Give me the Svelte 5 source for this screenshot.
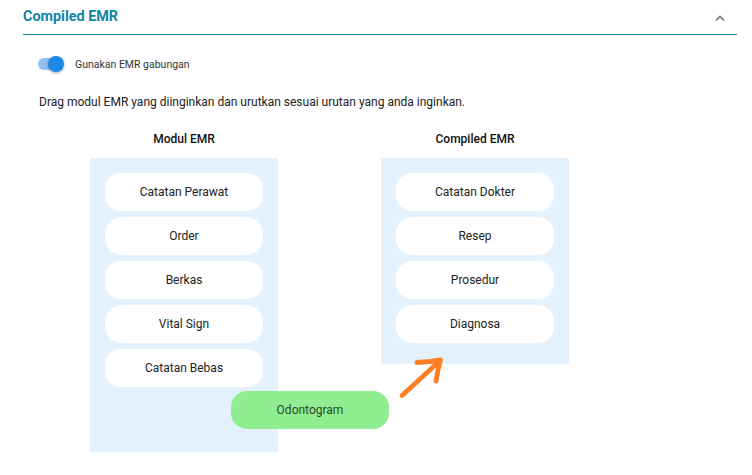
<script>
  const modul = ['Catatan Perawat', 'Order', 'Berkas', 'Vital Sign', 'Catatan Bebas'];
  const compiled = ['Catatan Dokter', 'Resep', 'Prosedur', 'Diagnosa'];
</script>

<div class="page">
  <section class="panel">
    <header class="panel-head">
      <h2>Compiled EMR</h2>
      <svg class="chevron" width="10" height="7" viewBox="0 0 10 7">
        <path d="M1 5.500 L5 1.500 L9 5.500" fill="none" stroke="#777" stroke-width="1.700" />
      </svg>
    </header>

    <div class="switch-row">
      <span class="switch"><span class="thumb"></span></span>
      <span class="switch-label">Gunakan EMR gabungan</span>
    </div>

    <p class="hint">Drag modul EMR yang diinginkan dan urutkan sesuai urutan yang anda inginkan.</p>

    <div class="columns">
      <div class="column">
        <h3>Modul EMR</h3>
        <div class="list tall">
          {#each modul as item}
            <div class="item">{item}</div>
          {/each}
        </div>
      </div>
      <div class="column">
        <h3>Compiled EMR</h3>
        <div class="list">
          {#each compiled as item}
            <div class="item">{item}</div>
          {/each}
        </div>
      </div>
    </div>
  </section>

  <!-- item yang sedang di-drag -->
  <div class="dragging">Odontogram</div>

  <svg class="arrow" width="48" height="44" viewBox="0 0 48 44">
    <path d="M4 38.500 L22 22 L34 11 L42 4 M19 5.500 L32 4.500 L42.500 3 L40 13 L38 24" fill="none" stroke="#ff7f27" stroke-width="4.800" stroke-linecap="round" stroke-linejoin="round" />
  </svg>
</div>

<style>
  :global(body) {
    margin: 0;
    background: #fff;
  }

  .page {
    position: relative;
    width: 752px;
    height: 475px;
    overflow: hidden;
    font-family: Roboto, "Liberation Sans", sans-serif;
    color: #1a1a1a;
  }

  .panel {
    margin: 0 15px 0 23px;
  }

  .panel-head {
    display: flex;
    align-items: center;
    justify-content: space-between;
    height: 34px;
    border-bottom: 1px solid #0a87a8;
    padding-right: 12px;
  }

  .panel-head h2 {
    margin: 0;
    font-size: 14.400px;
    font-weight: 700;
    color: #0f85a3;
    line-height: 36px;
  }

  .chevron {
    display: block;
    margin-top: 3px;
  }

  .switch-row {
    display: flex;
    align-items: center;
    margin: 19px 0 0 15px;
    height: 20px;
  }

  .switch {
    position: relative;
    width: 24px;
    height: 12px;
    border-radius: 6px;
    background: #8ec3f2;
    margin-right: 13px;
  }

  .thumb {
    position: absolute;
    right: -2px;
    top: -2px;
    width: 16px;
    height: 16px;
    border-radius: 50%;
    background: #1e88e5;
    box-shadow: 0 1px 3px rgba(0, 0, 0, 0.35);
  }

  .switch-label {
    font-size: 10.500px;
    color: #333;
  }

  .hint {
    margin: 21px 0 0 16px;
    font-size: 12px;
    line-height: 14px;
    color: #222;
  }

  .columns {
    display: flex;
    gap: 103px;
    margin: 23px 0 0 67px;
  }

  .column {
    width: 188px;
  }

  .column h3 {
    margin: 0 0 12px;
    font-size: 12px;
    font-weight: 500;
    line-height: 14px;
    text-align: center;
    color: #111;
  }

  .list {
    background: #e3f2fd;
    padding: 15px 15px 9px;
    height: 206px;
    box-sizing: border-box;
  }

  .list.tall {
    height: 294px;
  }

  .item {
    display: flex;
    align-items: center;
    justify-content: center;
    height: 38px;
    margin-bottom: 6px;
    border-radius: 16px;
    background: #fff;
    font-size: 12px;
    color: #222;
  }

  .dragging {
    position: absolute;
    left: 231px;
    top: 391px;
    width: 158px;
    height: 38px;
    display: flex;
    align-items: center;
    justify-content: center;
    border-radius: 16px;
    background: #90ee90;
    font-size: 12px;
    color: #2a4a2a;
  }

  .arrow {
    position: absolute;
    left: 398px;
    top: 357px;
  }
</style>
